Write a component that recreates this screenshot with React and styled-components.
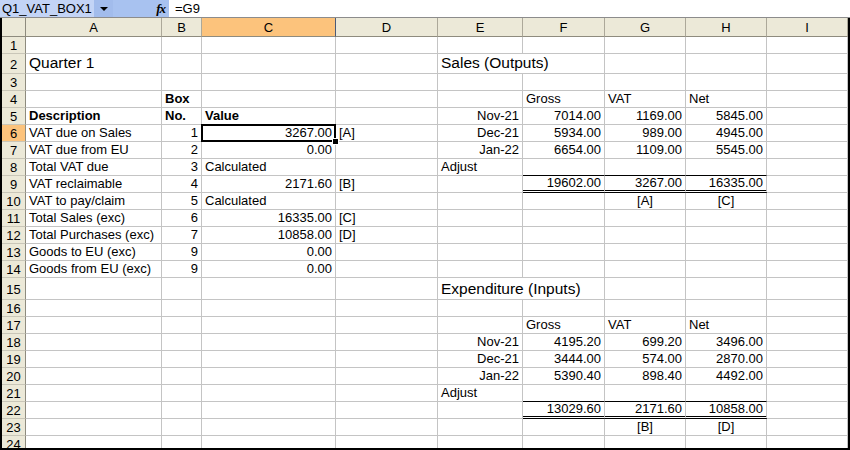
import React from 'react'
import styled, { createGlobalStyle, css } from 'styled-components'

const GlobalStyle = createGlobalStyle`
  html, body {
    margin: 0;
    padding: 0;
    background: #fff;
  }
  body {
    font-family: "Liberation Sans", Arial, sans-serif;
  }
`

const COLS = ['A', 'B', 'C', 'D', 'E', 'F', 'G', 'H', 'I']
const WIDTHS = [136, 40, 134, 102, 85, 82, 81, 81, 81]
const TALL = { 2: 20, 15: 22 }
const ROW_COUNT = 24

// r = right aligned number, c = centered, b = bold, big = title size, span = columns covered
const DATA = {
  2: { A: { t: 'Quarter 1', big: true }, E: { t: 'Sales (Outputs)', big: true, span: 2 } },
  4: { B: { t: 'Box', b: true }, F: { t: 'Gross' }, G: { t: 'VAT' }, H: { t: 'Net' } },
  5: {
    A: { t: 'Description', b: true }, B: { t: 'No.', b: true }, C: { t: 'Value', b: true },
    E: { t: 'Nov-21', r: true }, F: { t: '7014.00', r: true }, G: { t: '1169.00', r: true }, H: { t: '5845.00', r: true },
  },
  6: {
    A: { t: 'VAT due on Sales' }, B: { t: '1', r: true }, C: { t: '3267.00', r: true, sel: true }, D: { t: '[A]' },
    E: { t: 'Dec-21', r: true }, F: { t: '5934.00', r: true }, G: { t: '989.00', r: true }, H: { t: '4945.00', r: true },
  },
  7: {
    A: { t: 'VAT due from EU' }, B: { t: '2', r: true }, C: { t: '0.00', r: true },
    E: { t: 'Jan-22', r: true }, F: { t: '6654.00', r: true }, G: { t: '1109.00', r: true }, H: { t: '5545.00', r: true },
  },
  8: {
    A: { t: 'Total VAT due' }, B: { t: '3', r: true }, C: { t: 'Calculated' }, E: { t: 'Adjust' },
    F: { rule: 'under' }, G: { rule: 'under' }, H: { rule: 'under' },
  },
  9: {
    A: { t: 'VAT reclaimable' }, B: { t: '4', r: true }, C: { t: '2171.60', r: true }, D: { t: '[B]' },
    F: { t: '19602.00', r: true, rule: 'double' }, G: { t: '3267.00', r: true, rule: 'double' }, H: { t: '16335.00', r: true, rule: 'double' },
  },
  10: { A: { t: 'VAT to pay/claim' }, B: { t: '5', r: true }, C: { t: 'Calculated' }, G: { t: '[A]', c: true }, H: { t: '[C]', c: true } },
  11: { A: { t: 'Total Sales (exc)' }, B: { t: '6', r: true }, C: { t: '16335.00', r: true }, D: { t: '[C]' } },
  12: { A: { t: 'Total Purchases (exc)' }, B: { t: '7', r: true }, C: { t: '10858.00', r: true }, D: { t: '[D]' } },
  13: { A: { t: 'Goods to EU (exc)' }, B: { t: '9', r: true }, C: { t: '0.00', r: true } },
  14: { A: { t: 'Goods from EU (exc)' }, B: { t: '9', r: true }, C: { t: '0.00', r: true } },
  15: { E: { t: 'Expenditure (Inputs)', big: true, span: 2 } },
  17: { F: { t: 'Gross' }, G: { t: 'VAT' }, H: { t: 'Net' } },
  18: { E: { t: 'Nov-21', r: true }, F: { t: '4195.20', r: true }, G: { t: '699.20', r: true }, H: { t: '3496.00', r: true } },
  19: { E: { t: 'Dec-21', r: true }, F: { t: '3444.00', r: true }, G: { t: '574.00', r: true }, H: { t: '2870.00', r: true } },
  20: { E: { t: 'Jan-22', r: true }, F: { t: '5390.40', r: true }, G: { t: '898.40', r: true }, H: { t: '4492.00', r: true } },
  21: { E: { t: 'Adjust' }, F: { rule: 'under' }, G: { rule: 'under' }, H: { rule: 'under' } },
  22: {
    F: { t: '13029.60', r: true, rule: 'double' }, G: { t: '2171.60', r: true, rule: 'double' }, H: { t: '10858.00', r: true, rule: 'double' },
  },
  23: { G: { t: '[B]', c: true }, H: { t: '[D]', c: true } },
}

const Window = styled.div`
  width: 850px;
  height: 450px;
  overflow: hidden;
  background: #fff;
  display: flex;
  flex-direction: column;
`

const FormulaBar = styled.div`
  display: flex;
  height: 18px;
  flex: none;
  box-sizing: border-box;
  border-bottom: 1px solid #8c8c8c;
  font-size: 13px;
  line-height: 17px;
  color: #000;
`

const NameBox = styled.div`
  width: 94px;
  padding-left: 2px;
  box-sizing: border-box;
  background: #c3d4f6;
  white-space: nowrap;
`

const DropButton = styled.div`
  width: 19px;
  background: #a2bcec;
  display: flex;
  align-items: center;
  justify-content: center;
`

const Arrow = styled.span`
  width: 0;
  height: 0;
  border-left: 4px solid transparent;
  border-right: 4px solid transparent;
  border-top: 4px solid #000;
  margin-top: 1px;
`

const FxArea = styled.div`
  width: 56px;
  background: #a8c2f0;
  display: flex;
  justify-content: flex-end;
  padding-right: 4px;
  box-sizing: border-box;
`

const Fx = styled.span`
  font-family: "Liberation Serif", "Times New Roman", serif;
  font-style: italic;
  font-weight: bold;
  font-size: 13px;
  letter-spacing: -1px;
`

const FormulaText = styled.div`
  flex: 1;
  padding-left: 6px;
  background: #fff;
`

const Sheet = styled.div`
  flex: 1;
  display: grid;
  grid-template-columns: 24px ${WIDTHS.map(w => `${w}px`).join(' ')};
  grid-template-rows: 19px ${Array.from({ length: ROW_COUNT }, (_, i) => `${TALL[i + 1] || 17}px`).join(' ')};
  border-left: 2px solid #000;
  border-right: 2px solid #000;
  border-bottom: 2px solid #000;
  overflow: hidden;
  font-size: 13px;
  color: #000;
`

const headBase = css`
  box-sizing: border-box;
  background: ${p => (p.$active ? '#fcc37c' : '#ece9d8')};
  display: flex;
  align-items: center;
  justify-content: center;
  line-height: 1;
`

const Corner = styled.div`
  ${headBase}
  border-right: 1px solid #8e8b7e;
  border-bottom: 1px solid #8e8b7e;
`

const ColHead = styled.div`
  ${headBase}
  border-right: 1px solid ${p => (p.$active ? '#4a5a78' : '#aca899')};
  border-bottom: 1px solid #8e8b7e;
  padding-top: 1px;
`

const RowHead = styled.div`
  ${headBase}
  border-right: 1px solid #8e8b7e;
  border-bottom: 1px solid #c9c6b8;
  padding-top: 1px;
`

const Cell = styled.div`
  position: relative;
  box-sizing: border-box;
  grid-column: span ${p => p.$span || 1};
  border-right: 1px solid #c4c4c4;
  border-bottom: 1px solid ${p => (p.$rule === 'under' ? '#000' : '#c4c4c4')};
  ${p => p.$rule === 'double' && css`
    border-bottom: 3px double #000;
  `}
  display: flex;
  align-items: flex-end;
  justify-content: ${p => (p.$align === 'r' ? 'flex-end' : p.$align === 'c' ? 'center' : 'flex-start')};
  padding: 0 3px 0 3px;
  white-space: nowrap;
  font-weight: ${p => (p.$bold ? 'bold' : 'normal')};
  font-size: ${p => (p.$big ? '15.5px' : '13px')};
  line-height: ${p => (p.$big ? '20px' : '16px')};
  ${p => p.$rule === 'double' && css`
    line-height: 14px;
  `}
`

const Selection = styled.span`
  position: absolute;
  left: -1px;
  top: -1px;
  right: -1px;
  bottom: -1px;
  border: 2px solid #000;
  pointer-events: none;
`

const FillHandle = styled.span`
  position: absolute;
  right: -4px;
  bottom: -4px;
  width: 5px;
  height: 5px;
  background: #000;
  border: 1px solid #fff;
  z-index: 2;
`

const SELECTED = { col: 'C', row: 6 }

const renderRow = (r) => {
  const spec = DATA[r] || {}
  const out = [
    <RowHead key={`h${r}`} $active={r === SELECTED.row}>{r}</RowHead>,
  ]
  let skip = 0
  COLS.forEach((c) => {
    if (skip > 0) {
      skip -= 1
      return
    }
    const cell = spec[c] || {}
    if (cell.span) skip = cell.span - 1
    out.push(
      <Cell
        key={`${c}${r}`}
        $span={cell.span}
        $align={cell.r ? 'r' : cell.c ? 'c' : 'l'}
        $bold={cell.b}
        $big={cell.big}
        $rule={cell.rule}
      >
        {cell.t}
        {cell.sel && (
          <>
            <Selection />
            <FillHandle />
          </>
        )}
      </Cell>
    )
  })
  return out
}

const App = () => (
  <>
    <GlobalStyle />
    <Window>
      <FormulaBar>
        <NameBox>Q1_VAT_BOX1</NameBox>
        <DropButton><Arrow /></DropButton>
        <FxArea><Fx>fx</Fx></FxArea>
        <FormulaText>=G9</FormulaText>
      </FormulaBar>
      <Sheet>
        <Corner />
        {COLS.map(c => (
          <ColHead key={c} $active={c === SELECTED.col}>{c}</ColHead>
        ))}
        {Array.from({ length: ROW_COUNT }, (_, i) => renderRow(i + 1))}
      </Sheet>
    </Window>
  </>
)

export default App
